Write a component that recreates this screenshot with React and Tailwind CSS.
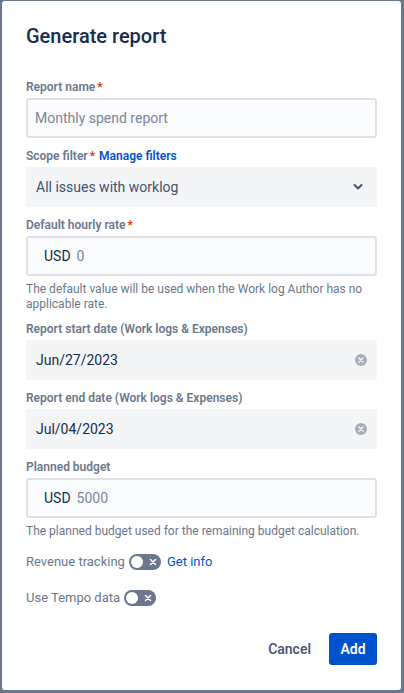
import React from 'react';

function Label({ children, required, extra }) {
  return (
    <div className="h-4 text-[12px] font-semibold text-[#6b778c] leading-4 mb-[3px]">
      {children}
      {required && <span className="text-[#de350b] ml-[2px]">*</span>}
      {extra}
    </div>
  );
}

function ClearIcon() {
  return (
    <svg width="12" height="12" viewBox="0 0 12 12">
      <circle cx="6" cy="6" r="6" fill="#a5adba" />
      <path d="M4 4l4 4M8 4l-4 4" stroke="#f4f5f7" strokeWidth="1.6" strokeLinecap="round" />
    </svg>
  );
}

function Toggle() {
  return (
    <div className="w-[32px] h-[16px] rounded-full bg-[#6b778c] flex items-center justify-between px-[2px]">
      <span className="w-[12px] h-[12px] rounded-full bg-white" />
      <svg width="10" height="10" viewBox="0 0 10 10" className="mr-[1px]">
        <path d="M2.5 2.5l5 5M7.5 2.5l-5 5" stroke="#fff" strokeWidth="1.5" strokeLinecap="round" />
      </svg>
    </div>
  );
}

function App() {
  return (
    <div className="w-[404px] h-[693px] bg-[#6b778c] pt-[1px] pl-[2px] pr-[3px] pb-[3px] font-['Roboto',sans-serif]">
      <div className="h-full bg-white rounded-[3px] px-[24px] flex flex-col">
        <h1 className="text-[20px] font-medium text-[#172b4d] leading-6 mt-[23px] mb-[31px]">Generate report</h1>

        <Label required>Report name</Label>
        <div className="h-[40px] shrink-0 rounded-[3px] border-2 border-[#dfe1e6] bg-[#fafbfc] flex items-center px-[7px] text-[14px] text-[#7a869a]">
          Monthly spend report
        </div>

        <div className="mt-[10px]">
          <Label
            required
            extra={<span className="text-[#0052cc] ml-[4px]">Manage filters</span>}
          >
            Scope filter
          </Label>
        </div>
        <div className="h-[40px] shrink-0 rounded-[3px] bg-[#f4f5f7] flex items-center justify-between pl-[10px] pr-[14px] text-[14px] text-[#42526e]">
          <span>All issues with worklog</span>
          <svg width="10" height="8" viewBox="0 0 10 8">
            <path d="M1.5 2l3.5 3.5L8.5 2" fill="none" stroke="#42526e" strokeWidth="2" strokeLinecap="round" strokeLinejoin="round" />
          </svg>
        </div>

        <div className="mt-[10px]">
          <Label required>Default hourly rate</Label>
        </div>
        <div className="h-[40px] shrink-0 rounded-[3px] border-2 border-[#dfe1e6] bg-[#fafbfc] flex items-center pl-[16px] text-[14px]">
          <span className="text-[#172b4d]">USD</span>
          <span className="text-[#7a869a] ml-[6px]">0</span>
        </div>
        <p className="text-[12px] text-[#6b778c] leading-[15px] mt-[6px] pr-[6px]">
          The default value will be used when the Work log Author has no applicable rate.
        </p>

        <div className="mt-[9px]">
          <Label>Report start date (Work logs &amp; Expenses)</Label>
        </div>
        <div className="h-[40px] shrink-0 rounded-[3px] bg-[#f4f5f7] flex items-center justify-between pl-[10px] pr-[10px] text-[14px] text-[#172b4d]">
          <span>Jun/27/2023</span>
          <ClearIcon />
        </div>

        <div className="mt-[10px]">
          <Label>Report end date (Work logs &amp; Expenses)</Label>
        </div>
        <div className="h-[40px] shrink-0 rounded-[3px] bg-[#f4f5f7] flex items-center justify-between pl-[10px] pr-[10px] text-[14px] text-[#172b4d]">
          <span>Jul/04/2023</span>
          <ClearIcon />
        </div>

        <div className="mt-[10px]">
          <Label>Planned budget</Label>
        </div>
        <div className="h-[40px] shrink-0 rounded-[3px] border-2 border-[#dfe1e6] bg-[#fafbfc] flex items-center pl-[16px] text-[14px]">
          <span className="text-[#172b4d]">USD</span>
          <span className="text-[#7a869a] ml-[6px]">5000</span>
        </div>
        <p className="text-[12px] text-[#6b778c] leading-[15px] mt-[6px]">
          The planned budget used for the remaining budget calculation.
        </p>

        <div className="flex items-center gap-[4px] mt-[15px] text-[13px] text-[#6b778c] leading-4">
          <span>Revenue tracking</span>
          <Toggle />
          <span className="text-[#0052cc] ml-[2px]">Get info</span>
        </div>

        <div className="flex items-center gap-[4px] mt-[20px] text-[13px] text-[#6b778c] leading-4">
          <span>Use Tempo data</span>
          <Toggle />
        </div>

        <div className="flex justify-end items-center gap-[6px] mt-[27px]">
          <button className="h-[32px] px-[12px] text-[14px] font-medium text-[#42526e]">Cancel</button>
          <button className="h-[32px] w-[48px] rounded-[3px] bg-[#0052cc] text-[14px] font-semibold text-white">Add</button>
        </div>
      </div>
    </div>
  );
}

export default App;
